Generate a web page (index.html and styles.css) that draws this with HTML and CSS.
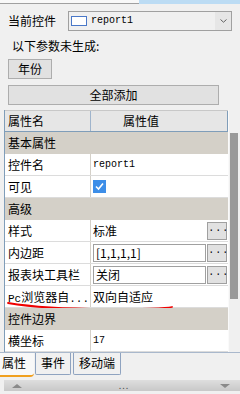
FILE: index.html
```html
<!DOCTYPE html>
<html>
<head>
<meta charset="UTF-8">
<meta name="viewport" content="width=device-width, initial-scale=1.0">
<link rel="stylesheet" href="styles.css">
</head>
<body>
<div class="topstrip"><div class="tab-hi"></div></div>

<div class="ctrl-row">
	<span class="label">当前控件</span>
	<div class="select">
		<span class="swatch"></span>
		<span class="mono">report1</span>
		<span class="drop">
			<svg width="7" height="4" viewBox="0 0 7 4"><path d="M0.5 0.5 L3.5 3.2 L6.5 0.5" fill="none" stroke="#606060" stroke-width="1"/></svg>
		</span>
	</div>
</div>

<div class="note">以下参数未生成:</div>
<div class="btn small">年份</div>
<div class="btn wide">全部添加</div>

<div class="grid-wrap">
	<div class="grid">
		<div class="row head">
			<div class="name">属性名</div>
			<div class="value">属性值</div>
		</div>
		<div class="row section">基本属性</div>
		<div class="row">
			<div class="name">控件名</div>
			<div class="value mono">report1</div>
		</div>
		<div class="row">
			<div class="name">可见</div>
			<div class="value">
				<span class="check">
					<svg width="13" height="13" viewBox="0 0 13 13"><path d="M3 6.5 L5.5 9 L10 3.5" fill="none" stroke="#fff" stroke-width="1.6"/></svg>
				</span>
			</div>
		</div>
		<div class="row section">高级</div>
		<div class="row">
			<div class="name">样式</div>
			<div class="value">
				<span class="plain">标准</span>
				<span class="more">...</span>
			</div>
		</div>
		<div class="row">
			<div class="name">内边距</div>
			<div class="value">
				<span class="field">[1,1,1,1]</span>
				<span class="more">...</span>
			</div>
		</div>
		<div class="row">
			<div class="name">报表块工具栏</div>
			<div class="value">
				<span class="field">关闭</span>
				<span class="more">...</span>
			</div>
		</div>
		<div class="row marked">
			<div class="name"><span class="mono">Pc</span>浏览器自<span class="mono">...</span></div>
			<div class="value">双向自适应</div>
			<svg class="scribble" width="180" height="12" viewBox="0 0 180 12"><path d="M4 2 Q 40 8 100 8 T 168 6" fill="none" stroke="#f00000" stroke-width="1.8" stroke-linecap="round"/></svg>
		</div>
		<div class="row section">控件边界</div>
		<div class="row">
			<div class="name">横坐标</div>
			<div class="value mono">17</div>
		</div>
	</div>
	<div class="vscroll"><div class="thumb"></div></div>
</div>

<div class="tabs">
	<div class="tab active">属性</div>
	<div class="tab">事件</div>
	<div class="tab">移动端</div>
</div>

<div class="hbar">
	<span class="tri up"></span>
	<span class="dots">...</span>
	<span class="tri down"></span>
</div>
</body>
</html>
```

FILE: styles.css
```css
body {
	margin: 0;
	width: 240px;
	height: 394px;
	overflow: hidden;
	background-color: #f0f0f0;
	font-family: "Noto Sans CJK SC", "Noto Sans", sans-serif;
	font-size: 12px;
	color: #000;
}

.mono {
	font-family: "Liberation Mono", monospace;
	font-size: 10px;
}

.topstrip {
	height: 3px;
	background-color: #f8f8f8;
	border-bottom: 1px solid #a0a0a0;
	position: relative;
}

.tab-hi {
	margin-left: 139px;
	height: 4px;
	background-color: #bcdcf4;
}

.ctrl-row {
	display: flex;
	align-items: center;
	margin-top: 7px;
	height: 20px;
}

.label {
	width: 60px;
	padding-left: 8px;
	line-height: 20px;
}

.select {
	display: flex;
	align-items: center;
	width: 162px;
	height: 18px;
	border: 1px solid #a0a0a0;
	background-color: #f0f0f0;
}

.swatch {
	width: 14px;
	height: 8px;
	margin: 0 4px 0 2px;
	border: 1px solid #4a78c8;
	background-color: #fff;
}

.select .mono {
	flex: 1;
	line-height: 18px;
}

.drop {
	width: 16px;
	height: 18px;
	display: flex;
	align-items: center;
	justify-content: center;
	background-color: #e6e6e6;
}

.note {
	margin-top: 5px;
	padding-left: 12px;
	line-height: 20px;
	height: 20px;
}

.btn {
	box-sizing: border-box;
	height: 20px;
	line-height: 18px;
	margin-left: 8px;
	border: 1px solid #adadad;
	background-color: #e1e1e1;
	text-align: center;
}

.btn.small {
	width: 44px;
	margin-top: 3px;
}

.btn.wide {
	width: 211px;
	margin-top: 6px;
}

.grid-wrap {
	display: flex;
	margin-top: 5px;
	height: 242px;
}

.grid {
	box-sizing: border-box;
	width: 229px;
	margin-left: 4px;
	border-left: 1px solid #7f9db9;
	background-color: #fff;
}

.row {
	position: relative;
	display: flex;
	height: 21px;
	border-bottom: 1px solid #dcdcdc;
	line-height: 21px;
}

.row .name {
	box-sizing: border-box;
	width: 86px;
	padding-left: 3px;
	border-right: 1px solid #d4d0c8;
	white-space: nowrap;
	overflow: hidden;
}

.row .value {
	flex: 1;
	display: flex;
	align-items: center;
	padding-left: 2px;
	padding-right: 1px;
}

.row .name .mono {
	font-size: 11px;
}

.row.head {
	background-color: #e6e6e6;
	border-top: 1px solid #c8c8c8;
	border-bottom: 1px solid #7f9db9;
	height: 20px;
	line-height: 20px;
}

.row.head .name {
	border-right: 1px solid #9fb4cc;
}

.row.head .value {
	padding-left: 32px;
	border-right: 1px solid #7f9db9;
}

.row.section {
	background-color: #d4d0c8;
	padding-left: 3px;
	border-bottom: 1px solid #d4d0c8;
}

.check {
	display: block;
	width: 13px;
	height: 13px;
	background-color: #3d8ee8;
}

.check svg {
	display: block;
}

.plain {
	flex: 1;
}

.field {
	box-sizing: border-box;
	flex: 1;
	height: 18px;
	line-height: 16px;
	padding-left: 2px;
	border: 1px solid #a0a0a0;
	background-color: #fff;
}

.more {
	box-sizing: border-box;
	width: 20px;
	height: 18px;
	margin-left: 1px;
	border: 1px solid #a0a0a0;
	background-color: #e1e1e1;
	text-align: center;
	line-height: 12px;
	letter-spacing: 1px;
	font-family: "Liberation Mono", monospace;
	font-size: 10px;
}

.scribble {
	position: absolute;
	left: -1px;
	top: 15px;
}

.vscroll {
	width: 11px;
	background-color: #f0f0f0;
	border-left: 1px solid #fafafa;
}

.thumb {
	margin: 23px 0 0 1px;
	width: 8px;
	height: 166px;
	background-color: #999;
}

.tabs {
	display: flex;
	height: 22px;
	border-top: 1px solid #a9b8cc;
}

.tab {
	box-sizing: border-box;
	height: 22px;
	padding: 0 5px;
	margin-right: 2px;
	border: 1px solid #8fa3c0;
	border-top: none;
	border-radius: 0 0 2px 2px;
	line-height: 20px;
}

.tab.active {
	width: 34px;
	padding: 0 0 0 2px;
	margin-right: 1px;
	height: 24px;
	border: none;
	border-bottom: 2px solid #f0a020;
	border-radius: 0 0 4px 0;
	background-color: #f8f8f8;
}

.hbar {
	display: flex;
	align-items: center;
	justify-content: space-between;
	margin-top: 5px;
	margin-left: 4px;
	height: 11px;
	padding: 0 10px 0 8px;
	background: linear-gradient(#dedede, #c8c8c8);
}

.tri {
	width: 0;
	height: 0;
	border-left: 5px solid transparent;
	border-right: 5px solid transparent;
}

.tri.up {
	border-bottom: 4px solid #8a8a8a;
}

.tri.down {
	border-top: 4px solid #8a8a8a;
}

.dots {
	color: #555;
	font-size: 9px;
	line-height: 11px;
	letter-spacing: 1px;
	margin-left: 6px;
}
```
